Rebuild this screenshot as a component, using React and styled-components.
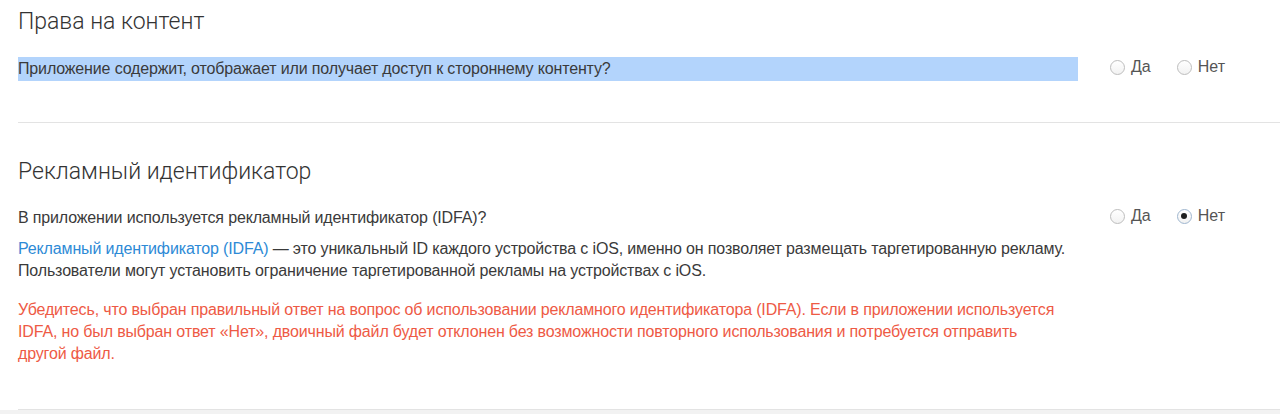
import React, { useState } from "react";
import styled, { createGlobalStyle } from "styled-components";

const GlobalStyle = createGlobalStyle`
  body {
    margin: 0;
    background: #fff;
    font-family: "Liberation Sans", Arial, sans-serif;
    color: #333;
  }
`;

const Page = styled.div`
  display: flex;
  flex-direction: column;
  overflow: hidden;
`;

const Section = styled.section`
  margin-left: 18px;
  padding: ${(p) => p.$pad};
  border-bottom: 1px solid #e3e3e3;
`;

const Strip = styled.div`
  height: 6px;
  background: #f2f2f2;
`;

const Title = styled.h2`
  margin: 0;
  font-family: Roboto, "Liberation Sans", sans-serif;
  font-weight: 300;
  font-size: 23px;
  line-height: 30px;
  color: #333;
`;

const Row = styled.div`
  display: grid;
  grid-template-columns: 1060px 1fr;
  column-gap: 32px;
  margin-top: ${(p) => p.$top}px;
`;

const Question = styled.div`
  font-size: 16px;
  line-height: 24px;
  color: #3a3a3a;
  letter-spacing: -0.15px;
  background: ${(p) => (p.$selected ? "#b3d4fc" : "transparent")};
`;

const Text = styled.p`
  margin: ${(p) => p.$top}px 0 0;
  max-width: ${(p) => (p.$warn ? "1050px" : "none")};
  font-size: 16px;
  line-height: 22px;
  letter-spacing: -0.15px;
  color: ${(p) => (p.$warn ? "#ee5a45" : "#3a3a3a")};
`;

const Link = styled.a`
  color: #2d8ad6;
  text-decoration: none;
`;

const Choices = styled.div`
  display: flex;
  align-items: center;
  gap: 26px;
  height: 24px;
  margin-top: ${(p) => p.$top || 0}px;
`;

const Option = styled.label`
  display: flex;
  align-items: center;
  gap: 6px;
  font-size: 16px;
  color: #555;
  cursor: pointer;
`;

const Circle = styled.span`
  box-sizing: border-box;
  width: 15px;
  height: 15px;
  border-radius: 50%;
  border: 1px solid ${(p) => (p.$on ? "#9fb6cf" : "#bdbdbd")};
  background: linear-gradient(#fff, #f2f2f2);
  display: flex;
  align-items: center;
  justify-content: center;
  &::after {
    content: "";
    width: 6px;
    height: 6px;
    border-radius: 50%;
    background: ${(p) => (p.$on ? "#1e1e1e" : "transparent")};
  }
`;

function YesNo({ value, onChange, top }) {
  return (
    <Choices $top={top}>
      {["Да", "Нет"].map((label) => (
        <Option key={label} onClick={() => onChange(label)}>
          <Circle $on={value === label} />
          {label}
        </Option>
      ))}
    </Choices>
  );
}

export default function App() {
  const [content, setContent] = useState("");
  const [idfa, setIdfa] = useState("Нет");

  return (
    <Page>
      <GlobalStyle />
      <Section $pad="7px 0 41px">
        <Title>Права на контент</Title>
        <Row $top={20}>
          <Question $selected>
            Приложение содержит, отображает или получает доступ к стороннему контенту?
          </Question>
          <YesNo value={content} onChange={setContent} top={-2} />
        </Row>
      </Section>
      <Section $pad="34px 0 44px">
        <Title>Рекламный идентификатор</Title>
        <Row $top={19}>
          <div>
            <Question>В приложении используется рекламный идентификатор (IDFA)?</Question>
            <Text $top={8}>
              <Link href="#">Рекламный идентификатор (IDFA)</Link> — это уникальный ID каждого
              устройства с iOS, именно он позволяет размещать таргетированную рекламу.
              Пользователи могут установить ограничение таргетированной рекламы на устройствах с iOS.
            </Text>
            <Text $top={17} $warn>
              Убедитесь, что выбран правильный ответ на вопрос об использовании рекламного
              идентификатора (IDFA). Если в приложении используется IDFA, но был выбран ответ
              «Нет», двоичный файл будет отклонен без возможности повторного использования и
              потребуется отправить другой файл.
            </Text>
          </div>
          <YesNo value={idfa} onChange={setIdfa} top={-2} />
        </Row>
      </Section>
      <Strip />
    </Page>
  );
}
